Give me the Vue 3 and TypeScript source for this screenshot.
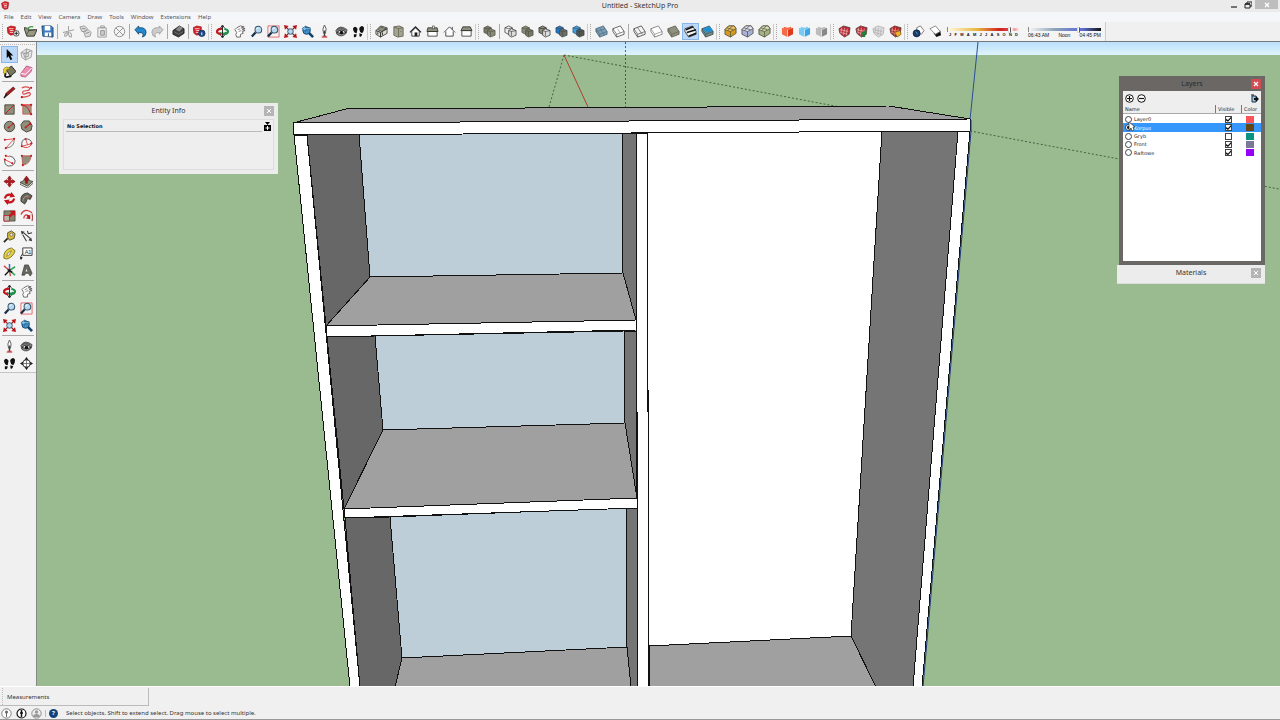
<script setup lang="ts">
import { ref } from 'vue'

type Shape = [d: string, fill: string, stroke?: string, width?: number]

const disc = (x: number, y: number, r: number) =>
  `M${x - r} ${y}a${r} ${r} 0 1 0 ${2 * r} 0a${r} ${r} 0 1 0 ${-2 * r} 0z`

const RED = '#c4161c'
const INK = '#222222'
const STONE = '#8f8f7c'

const logo = (x: number, y: number): Shape[] => [
  [`M${x} ${y + 2}l4 -2 5 1 0 2 -1 6 -4 1 -3 -2z`, '#d3232a', '#8d0f14', 0.6],
  [`M${x + 2} ${y + 3}l5 0M${x + 3} ${y + 5}l4 0M${x + 3} ${y + 7}l4 0`, 'none', '#ffffff', 0.8],
]
const lens = (x: number, y: number): Shape[] => [
  [`M${x - 3} ${y + 3}l-4 4.500`, 'none', '#14304a', 2.4],
  [disc(x, y, 3.6), '#b5d8ef', '#37536b', 1.1],
  [`M${x - 2} ${y - 1}l2 -1`, 'none', '#ffffff', 1],
]
const pair = (back: string, front: string, line = INK): Shape[] => [
  ['M1 3l4 -2 4 2 0 5 -4 2 -4 -2z', back, line, 0.7],
  ['M1 3l4 1 4 -1', 'none', line, 0.6],
  ['M5 6l3 -2 5 2 0 5 -5 2 -3 -2z', front, line, 0.7],
  ['M5 6l3 1 5 -1M8 7l0 5', 'none', line, 0.6],
]
const slab = (fill: string, line: string): Shape[] => [
  ['M1 4l8 -3 4 6 0 3 -8 3 -4 -6z', fill, line, 0.9],
  ['M1 4l4 6 8 -3M5 10l0 3', 'none', line, 0.7],
]
const section = (left: string, right: string): Shape[] => [
  ['M1 3l6 2 0 8 -6 -3z', left, 'none'],
  ['M13 3l-6 2 0 8 6 -3z', right, 'none'],
  ['M3 2l4 1 4 -1 0 2 -4 2 -4 -2z', left, 'none'],
  ['M7 5l0 8', 'none', '#ffffff', 0.6],
]
const box = (top: string, side: string): Shape[] => [
  ['M1 5l4 -4 6 0 2 3 0 5 -6 4 -6 -3z', side, '#444433', 0.8],
  ['M1 5l4 -4 6 0 2 3 -6 3z', top, '#444433', 0.7],
  ['M7 7l0 6M3 3l7 2M9 1l-5 5', 'none', '#555544', 0.8],
]
const brick = (fill: string, mark: string): Shape[] => [
  ['M1 4l5 -3 7 2 -1 7 -5 3 -5 -4z', fill, '#4a3a36', 0.8],
  ['M2 5l9 2M4 3l-1 6M7 3l-1 8M10 4l-1 7M3 8l7 2', 'none', mark, 0.7],
]
const steps: Shape[] = [
  ['M1 4q2 -4 5 0l-1 5q-3 0 -4 -5zM2 10l3 0q0 4 -3 3z', '#111111'],
  ['M8 3q3 -4 5 0q0 4 -2 6q-4 -2 -3 -6zM8 9l3 1q-1 4 -3 2z', '#111111'],
]
const hand: Shape[] = [
  ['M4 13q-2 -3 0 -5l-2 -3 2 -2 4 -2 4 1 -3 1 4 1 -3 1 3 1 -3 1 1 2 -3 1 0 3z', '#ffffff', '#555555', 0.9],
  ['M5 5l3 -1M6 7l3 -1', 'none', '#555555', 0.7],
]
const eye: Shape[] = [
  ['M1 6q4 -7 12 -1l-1 4q-5 5 -10 1z', '#8a8a8a', '#333333', 0.8],
  ['M2 8q5 -5 10 0q-5 3 -10 0z', '#eeeeee', '#111111', 0.9],
  [disc(7, 8, 1.8), '#111111'],
  ['M2 5q5 -3 9 0', 'none', '#444444', 0.8],
]
const extents: Shape[] = [
  ['M0 0l5 1 -4 4zM14 0l-1 5 -4 -4zM0 14l1 -5 4 4zM14 14l-5 -1 4 -4z', RED],
  ['M2 2l10 10M12 2l-10 10', 'none', '#8d1a1a', 1.4],
  [disc(7, 7, 3), '#b5d8ef', '#37536b', 1],
]
const orbit: Shape[] = [
  ['M9 4q4 1 4 3q-1 3 -6 3', 'none', '#1c8f4a', 2.4],
  ['M6 10q-5 -1 -5 -3q1 -3 6 -3', 'none', RED, 2.4],
  ['M4 8q3 2 7 0', 'none', '#1c8f4a', 1.4],
  ['M7 1l0 12M5 3l2 -3 2 3M5 11l2 3 2 -3', 'none', INK, 1],
]
const previous: Shape[] = [
  ['M8 8l5 5', 'none', '#123f66', 2.8],
  [disc(6, 6, 4), '#3d8fca', '#123f66', 1],
  ['M1 4l4 -3 0 2 5 0 0 2 -5 0 0 2z', '#7cc4ef', '#123f66', 0.6],
]
const rocket: Shape[] = [
  ['M7 0q-3 4 -1 9l2 0q2 -5 -1 -9z', '#ffffff', '#555555', 1],
  ['M5 12l4 0M4 13l6 0', 'none', RED, 1],
  ['M7 6l0 6', 'none', '#444444', 1.4],
]

const icons: Record<string, Shape[]> = {
  logo: logo(2, 2),
  new: [...logo(0, 1), [disc(10, 9, 3), '#ffffff', INK, 0.8], ['M10 7l0 4M8 9l4 0', 'none', INK, 1]],
  open: [
    ['M0 3l3 9 8 0 3 -7 -9 1 0 -2 -3 -1z', '#9a9a82', INK, 0.9],
    ['M3 10l3 -5 6 0', 'none', '#444438', 0.8],
    ['M3 4l3 1M4 4q2 -3 6 -2', 'none', '#3e9c3e', 1.3],
  ],
  save: [
    ['M1 1l10 0 2 2 0 10 -11 -1z', '#3a7dc0', '#1c426b', 0.9],
    ['M4 1l6 0 0 5 -6 0zM4 8l7 0 0 4 -7 0z', '#ffffff'],
    ['M8 9l0 3', 'none', '#1c426b', 1],
  ],
  cut: [['M1 8l12 -3M7 1l0 8M6 8q-4 1 -3 4q3 0 3 -4M8 8q3 1 2 5q-3 0 -3 -4', 'none', '#a2a2a2', 1.1]],
  copy: [
    ['M1 2l5 -1 3 3 -2 3 -4 0zM5 7l5 -2 3 3 -1 4 -5 1z', '#dddddd', '#999999', 1],
    ['M3 4l4 0M7 9l4 -1', 'none', '#888888', 1],
  ],
  paste: [
    ['M2 3l9 0 0 10 -9 0zM5 1l4 0 0 2 -4 0z', '#eeeeee', '#9c9c9c', 1],
    ['M5 6l4 0 0 5 -4 0z', '#cccccc', '#888888', 0.9],
  ],
  erase: [
    [disc(7, 7, 5.6), 'none', '#8e8e8e', 1],
    ['M3 3l8 8M11 3l-8 8', 'none', '#8e8e8e', 1],
  ],
  undo: [['M1 5l4 -4 0 2q8 -1 8 5q0 4 -4 5q3 -5 -4 -5l0 2z', '#2388cc', '#0e3c60', 0.8]],
  redo: [['M13 5l-4 -4 0 2q-8 -1 -8 5q0 4 4 5q-3 -5 4 -5l0 2z', '#cccccc', '#999999', 0.8]],
  print: [
    ['M1 6l7 -5 5 3 0 5 -6 4 -6 -3z', '#3e3e3e', '#111111', 0.8],
    ['M4 5l4 -4 4 2 -4 4z', '#8b8b8b'],
    ['M2 7l5 3 5 -3', 'none', '#888888', 0.7],
  ],
  info: [...logo(0, 1), [disc(9.5, 9, 3.5), '#1d4b8a', '#10264a', 0.7], ['M9.500 8l0 3', 'none', '#ffffff', 1]],
  orbit,
  pan: hand,
  zoom: lens(9, 5),
  zoomWindow: [['M1 1l12 0 0 12 -12 0z', 'none', '#e05656', 0.9], ...lens(8, 5)],
  extents,
  previous,
  rocket,
  eye,
  steps,
  iso: [
    ['M1 6l5 -5 7 2 0 6 -7 4 -5 -3z', '#dcdcd2', INK, 0.8],
    ['M1 6l5 2 7 -4M6 8l0 5M8 8l0 3M3 8l0 2', 'none', INK, 1],
    ['M6 2l6 2 -5 3 -4 -2z', STONE, INK, 0.6],
  ],
  top: [
    ['M2 2l6 -1 4 2 0 9 -6 1 -4 -2z', '#a5a58f', '#606050', 0.9],
    ['M2 2l5 2 5 -1M7 4l0 9M9 7l1 0', 'none', '#606050', 0.8],
  ],
  front: [
    ['M3 7l0 5 8 0 0 -5 -4 -4z', '#ffffff', INK, 0.9],
    ['M1 8l6 -6 6 6', 'none', INK, 1.3],
    ['M6 8l3 0 0 4 -3 0z', '#222222'],
  ],
  right: [
    ['M2 7l10 0 0 5 -10 0z', '#ffffff', INK, 0.8],
    ['M2 3l10 0 1 4 -12 0z', STONE, INK, 0.8],
    ['M7 1l2 0 0 3 -2 0z', '#ffffff', INK, 0.6],
  ],
  back: [['M3 7l0 5 8 0 0 -5M1 8l6 -6 6 6M10 2l0 3', '#ffffff', '#333333', 0.9]],
  left: [
    ['M2 6l10 0 0 6 -10 0z', '#ffffff', INK, 0.8],
    ['M3 2l8 0 2 4 -12 0z', STONE, INK, 0.8],
  ],
  outer: pair('#77776a', '#8a8a78', '#4a4a40'),
  intersect: pair('#eeeeee', '#dddddd'),
  union: pair('#8a8a78', '#77776a', '#444438'),
  subtract: pair('#8a8a78', '#dddddd'),
  trim: pair('#2277c5', '#6e6e60', '#344450'),
  split: pair('#3b9fe5', '#555550', '#344450'),
  xray: [...slab('#7c9fb8', '#4b6679'), ['M5 3l5 8M1 7l10 -3', 'none', '#4b6679', 0.6]],
  backEdges: [...slab('#ffffff', '#4a4a4a'), ['M6 4l3 5', 'none', '#777777', 0.6]],
  wire: [...slab('none', '#444444'), ['M5 3l5 7', 'none', '#444444', 0.7]],
  hidden: slab('#ffffff', '#777777'),
  shaded: slab('#90907f', '#5c5c4f'),
  textured: [
    ['M1 4l8 -3 4 6 0 3 -8 3 -4 -6z', '#f4f4f4', '#222222', 0.8],
    ['M2 5l8 -3M3 8l10 -3M5 12l8 -3', 'none', '#111111', 1.7],
  ],
  mono: [...slab('#7e8a84', '#3d4d50'), ['M2 4l7 -3 4 5 -7 3z', '#208fd0']],
  boxGold: box('#f0c15a', '#d89a1d'),
  boxBlue: box('#e0e4f8', '#a8b2d8'),
  boxGreen: box('#d5dcb0', '#a4b184'),
  sectionRed: section('#f36a48', '#e03a1c'),
  sectionBlue: section('#79cbf5', '#3fa2e2'),
  sectionGray: section('#bcbcbc', '#888888'),
  brickRed: brick('#ba2934', '#f0c5c5'),
  brickUp: [...brick('#ba2934', '#f0c5c5'), ['M10 6l3 4 -2 0 0 3 -3 0 0 -3 -2 0z', '#18823b']],
  brickGray: [...brick('#dddddd', '#aaaaaa').map((s): Shape => [s[0], s[1], '#aaaaaa', s[3]])],
  brickGold: [...brick('#b92225', '#e8b2a5'), ['M6 8l6 -2 1 4 -4 3z', '#f0b12b', '#6f4d10', 0.7]],
  shadowOn: [
    ['M5 3l4 -2 4 5 -3 4 -4 -1z', '#ffffff', '#555555', 0.8],
    [disc(5, 9, 3.8), '#183b68', '#0b203c', 0.8],
    ['M4 7l2 3', 'none', '#7ea4d4', 0.8],
  ],
  shadowOff: [
    ['M5 9l7 -3 1 5 -5 2z', '#111111'],
    ['M1 4l6 -3 5 6 -5 3z', '#ffffff', '#666666', 0.8],
  ],
  select: [['M4 1l0 10 2 -2 2 4 2 -1 -2 -4 3 0z', '#050505']],
  component: [
    ['M1 5l6 -4 6 2 -1 7 -6 3 -4 -3z', '#e5e5e5', '#999999', 0.9],
    ['M4 6l5 -1 0 4 -4 1zM7 1l-1 12M1 5l5 1 6 -3', 'none', '#9a9a9a', 1],
  ],
  paint: [
    ['M4 6l5 -5 5 6 -6 5z', '#777762', '#26261e', 1],
    ['M0 5q4 -5 8 -1l-4 1 -1 5q-3 0 -3 -5z', '#e7ce2d', '#65570d', 0.6],
    ['M3 9q-2 4 1 4l5 -1', 'none', '#151515', 2],
  ],
  eraser: [
    ['M1 9l6 -8 6 2 -1 4 -6 6 -5 -1z', '#ee8eb2', '#a94b70', 0.8],
    ['M1 9l5 1 7 -7', 'none', '#ffffff', 1],
  ],
  pencil: [
    ['M2 12l1 -4 8 -7 2 2 -8 7z', '#a41c20', '#500b0d', 0.7],
    ['M1 13l3 -4', 'none', '#111111', 1.3],
  ],
  freehand: [
    ['M2 2C6 0 12 1 10 4C8 6 2 4 3 8C4 11 10 5 11 8C12 10 8 12 2 12', 'none', '#d84b4f', 1.3],
    [`${disc(2, 12, 1.2)}${disc(12, 2, 1.2)}`, RED],
  ],
  rect: [
    ['M2 2l10 0 0 10 -10 0z', STONE, '#454538', 1],
    ['M2 12l10 -10', 'none', RED, 1],
  ],
  rotRect: [
    ['M3 3l9 0 0 9 -9 0z', '#9a9b86', '#c54b43', 0.8],
    ['M2 2l10 0M2 2q7 1 9 9', 'none', RED, 1],
    [`${disc(2, 2, 1.2)}${disc(12, 12, 1.2)}${disc(12, 2, 1.2)}`, RED],
  ],
  circle: [
    [disc(7, 7, 5.6), STONE, '#444438', 1],
    ['M6 8l5 -4', 'none', RED, 1],
    [`${disc(6, 8, 1.1)}${disc(11, 4, 1)}`, RED],
  ],
  polygon: [
    ['M4 1l6 0 3 5 -1 5 -5 2 -5 -3 -1 -5z', STONE, '#444438', 1],
    ['M6 8l5 -4', 'none', RED, 1.2],
    [`${disc(6, 8, 1.1)}${disc(11, 4, 1.2)}`, RED],
  ],
  arc: [
    ['M2 3l10 -1 -9 10', 'none', '#d94a4a', 1],
    ['M12 2q1 9 -9 10', 'none', '#777777', 1],
    [`${disc(2, 3, 1.1)}${disc(12, 2, 1.1)}${disc(3, 12, 1.1)}`, RED],
  ],
  twoArc: [
    ['M2 10q-1 -7 4 -8q6 0 7 5', 'none', '#555555', 1],
    ['M2 10q7 4 11 -3M2 10l11 -3M6 2l2 6', 'none', '#d94a4a', 1],
    [`${disc(2, 10, 1.1)}${disc(12, 7, 1.1)}${disc(6, 2, 1)}`, RED],
  ],
  threeArc: [
    ['M2 6q-1 6 4 7q7 0 7 -6q-1 -4 -6 -5', 'none', '#555555', 1],
    ['M2 6l8 4M3 2l4 1', 'none', '#d94a4a', 1],
    [`${disc(2, 6, 1.1)}${disc(3, 2, 1.1)}${disc(10, 10, 1.1)}`, RED],
  ],
  pie: [
    ['M2 2l10 0q-1 9 -9 10z', STONE, '#b84c42', 0.8],
    [`${disc(2, 2, 1.1)}${disc(12, 2, 1.1)}${disc(3, 12, 1.1)}`, RED],
  ],
  move: [['M7 1l2 3 -1 0 0 2 2 0 0 -1 3 2 -3 2 0 -1 -2 0 0 2 1 0 -2 3 -2 -3 1 0 0 -2 -2 0 0 1 -3 -2 3 -2 0 1 2 0 0 -2 -1 0z', RED, '#861015', 0.8]],
  push: [
    ['M0 8l6 -3 8 2 -6 5z', STONE, '#3c3c32', 0.9],
    ['M0 8l0 2 8 4 6 -5', 'none', '#3c3c32', 0.8],
    ['M7 1l3 4 -2 0 0 4 -2 0 0 -4 -2 0z', '#a5151b', '#4f0b0d', 0.5],
  ],
  rotate: [
    ['M2 7q1 -5 7 -4M12 7q-1 5 -7 4', 'none', RED, 2.2],
    ['M9 0l4 5 -6 1zM5 14l-4 -5 6 -1z', RED],
  ],
  follow: [
    ['M1 10q-1 -8 7 -9l5 3 -2 4q-4 -2 -4 2l-2 3z', '#66665a', '#22221e', 0.8],
    ['M8 4l3 2 -4 1z', '#bb5348'],
    ['M3 10q0 -5 6 -6', 'none', '#a5a594', 1],
  ],
  scale: [
    ['M1 2l12 0 0 11 -12 0z', '#85856f', '#464638', 0.8],
    ['M1 7l6 0 0 6 -6 0z', '#b7b7a8', RED, 0.8],
    ['M7 2l6 0 0 6 -2 -2 -3 3 -2 -2 3 -3z', RED],
  ],
  offset: [
    ['M1 6q4 -8 12 -2M4 10q1 -6 6 -2', 'none', '#d13b3c', 1.4],
    ['M13 5q1 4 0 8', 'none', '#8f1b1b', 1],
    ['M11 11l-5 -1 2 -1 -1 -3 3 1 1 -1z', RED],
  ],
  tape: [
    ['M5 3l4 -2 4 3 -1 5 -5 2 -2 -3z', '#d8bd3b', '#4a4014', 0.9],
    ['M5 9l-4 4', 'none', '#272310', 1.8],
    [disc(9, 5, 1.6), '#eeeeee', '#555555', 0.7],
  ],
  dimension: [
    ['M4 3l7 6M3 5l4 7M9 4l4 -1M8 1l1 3', 'none', '#333333', 1.1],
    ['M1 1l4 1 -3 3zM13 12l-4 -1 3 -3z', '#333333'],
  ],
  protractor: [
    ['M1 12q-1 -9 8 -11l4 3q-2 7 -9 9z', '#e3cf44', '#716416', 0.9],
    ['M4 10q0 -4 5 -6q-1 5 -5 6z', '#ffffff', '#716416', 0.7],
  ],
  axes: [
    ['M7 7l0 -7', 'none', '#3768c9', 1.6],
    ['M7 7l6 -4M7 7l6 5', 'none', '#38a85f', 1.8],
    ['M7 7l-6 -5M7 7l1 6', 'none', '#d04d4d', 1.5],
    ['M8 6l-6 6M5 6l5 3', 'none', '#151515', 1.5],
  ],
  text3d: [
    ['M2 12l3 -11 4 0 4 9 -2 3 -2 -3 -3 0 -1 2z', '#66665e', '#333330', 0.7],
    ['M7 5l1 3 -2 0z', '#f4f4f4'],
  ],
  lookSection: [
    ['M7 0l2 3 2 2 3 2 -3 2 -2 2 -2 3 -2 -3 -2 -2 -3 -2 3 -2 2 -2z', '#111111'],
    [disc(7, 7, 4), '#ffffff', '#222222', 0.9],
    ['M3 7l8 0M7 3l0 8', 'none', '#555555', 0.8],
  ],
}

const menus = ['File', 'Edit', 'View', 'Camera', 'Draw', 'Tools', 'Window', 'Extensions', 'Help']

// A toolbar is split by grips; the groups inside it are split by thin rules.
const toolbars = [
  [['new', 'open', 'save'], ['cut', 'copy', 'paste', 'erase'], ['undo', 'redo'], ['print'], ['info']],
  [['orbit', 'pan', 'zoom', 'zoomWindow', 'extents', 'previous', 'rocket', 'eye', 'steps']],
  [['iso', 'top', 'front', 'right', 'back', 'left']],
  [['outer'], ['intersect', 'union', 'subtract', 'trim', 'split']],
  [['xray', 'backEdges'], ['wire', 'hidden', 'shaded', 'textured', 'mono']],
  [['boxGold', 'boxBlue', 'boxGreen']],
  [['sectionRed', 'sectionBlue', 'sectionGray']],
  [['brickRed', 'brickUp', 'brickGray', 'brickGold']],
  [['shadowOn', 'shadowOff']],
]
const palette = [
  ['select', 'component', 'paint', 'eraser'],
  ['pencil', 'freehand', 'rect', 'rotRect', 'circle', 'polygon', 'arc', 'twoArc', 'threeArc', 'pie'],
  ['move', 'push', 'rotate', 'follow', 'scale', 'offset'],
  ['tape', 'dimension', 'protractor', 'label', 'axes', 'text3d'],
  ['orbit', 'pan', 'zoom', 'zoomWindow', 'extents', 'previous'],
  ['rocket', 'eye', 'steps', 'lookSection'],
]
const months = 'JFMAMJJASOND'.split('')

const tool = ref('select')
const faceStyle = ref('textured')
const date = ref(87)
const time = ref(70)
const activeLayer = ref('Korpus')
const layers = ref([
  { name: 'Layer0', visible: true, swatch: 'coral' },
  { name: 'Korpus', visible: true, swatch: 'brown' },
  { name: 'Gryb', visible: false, swatch: 'teal' },
  { name: 'Front', visible: true, swatch: 'slate' },
  { name: 'Raftowe', visible: true, swatch: 'violet' },
])

const DARK = '#676767'
const SIDE = '#757575'
const TOP = '#a0a0a0'
const BACK = '#bdced9'
const faces: [string, string][] = [
  ['293,123 346,109 889,106 970,119', TOP],
  ['307,135 359,134 370,277 326,326', DARK],
  ['359,134 622,133 623,273 370,277', BACK],
  ['622,133 636,133 636,320 623,273', SIDE],
  ['370,277 623,273 636,320 326,326', TOP],
  ['327,337 375,336 383,430 344,509', DARK],
  ['375,336 624,331 625,423 383,430', BACK],
  ['624,331 636,331 637,498 625,423', SIDE],
  ['383,430 625,423 637,498 344,509', TOP],
  ['345,518 390,517 402,658 395,687 360,687', DARK],
  ['390,517 626,508 627,647 402,658', BACK],
  ['626,508 637,508 638,687 631,687 627,647', SIDE],
  ['402,658 627,647 631,687 395,687', TOP],
  ['647,133 882,131 851,636 649,646', '#ffffff'],
  ['649,646 851,636 876,687 649,687', TOP],
  ['882,131 958,131 913,687 876,687 851,636', SIDE],
  ['294,135 307,135 360,687 350,687', '#ffffff'],
  ['636,133 647,133 649,687 638,687', '#ffffff'],
  ['958,131 970,131 922,687 913,687', '#ffffff'],
  ['326,326 636,320 636,330 327,337', '#ffffff'],
  ['344,509 637,498 637,508 345,518', '#ffffff'],
  ['293,123 970,119 970,131 294,135', '#ffffff'],
]
</script>

<template>
  <div class="app">
    <header class="titlebar">
      <svg class="brand" viewBox="0 0 14 14" aria-hidden="true">
        <path v-for="(s, i) in icons.logo" :key="i" :d="s[0]" :fill="s[1]" :stroke="s[2]" :stroke-width="s[3]" />
      </svg>
      <h1>Untitled - SketchUp Pro</h1>
      <div class="window-buttons">
        <button aria-label="Minimize"><svg viewBox="0 0 8 8"><path d="M1 6h6" stroke="#222" stroke-width="1.200" /></svg></button>
        <button aria-label="Restore"><svg viewBox="0 0 8 8"><path d="M3 3V1h5v4H6M1 3h5v4H1z" fill="none" stroke="#222" /><path d="M1 3h5" stroke="#222" stroke-width="1.500" /></svg></button>
        <button class="close" aria-label="Close"><svg viewBox="0 0 8 8"><path d="M2 2l4 4M6 2l-4 4" stroke="#fff" stroke-width="1.300" /></svg></button>
      </div>
    </header>

    <nav class="menubar">
      <button v-for="m in menus" :key="m">{{ m }}</button>
    </nav>

    <div class="toolbar-row">
      <div v-for="(bar, b) in toolbars" :key="b" class="toolbar">
        <div v-for="(group, g) in bar" :key="g" class="group">
          <button
            v-for="name in group"
            :key="name"
            class="tool"
            :class="{ active: name === faceStyle }"
            :aria-label="name"
          >
            <svg viewBox="0 0 14 14">
              <path v-for="(s, i) in icons[name]" :key="i" :d="s[0]" :fill="s[1]" :stroke="s[2]" :stroke-width="s[3]" />
            </svg>
          </button>
        </div>
      </div>
      <div class="shadow-sliders">
        <label class="slider date">
          <input v-model="date" type="range" min="0" max="100" aria-label="Date" />
          <span class="ticks"><i v-for="(m, i) in months" :key="i">{{ m }}</i></span>
        </label>
        <label class="slider time">
          <input v-model="time" type="range" min="0" max="100" aria-label="Time" />
          <span class="ticks"><i>06:43 AM</i><i>Noon</i><i>04:45 PM</i></span>
        </label>
      </div>
    </div>

    <main class="workspace">
      <aside class="palette">
        <div class="palette-tools">
          <div v-for="(group, g) in palette" :key="g" class="palette-group">
            <button
              v-for="name in group"
              :key="name"
              class="tool"
              :class="{ active: name === tool }"
              :aria-label="name"
              @click="tool = name"
            >
              <svg v-if="name === 'label'" viewBox="0 0 14 14">
                <path d="M3 1h10v8H3zM3 7L1 10v3" fill="#fff" stroke="#333" />
                <path d="M0 11h3l-2 3z" fill="#111" />
                <text x="5" y="7" font-size="6" font-family="Liberation Sans, sans-serif" fill="#222">A1</text>
              </svg>
              <svg v-else viewBox="0 0 14 14">
                <path v-for="(s, i) in icons[name]" :key="i" :d="s[0]" :fill="s[1]" :stroke="s[2]" :stroke-width="s[3]" />
              </svg>
            </button>
          </div>
        </div>
      </aside>

      <section class="canvas">
        <svg class="scene" viewBox="37 42 1243 644" preserveAspectRatio="xMidYMin slice" aria-label="Model">
          <defs>
            <linearGradient id="sky" x1="0" y1="0" x2="0" y2="1">
              <stop offset="0" stop-color="#b9e0fb" />
              <stop offset="1" stop-color="#e0f3fc" />
            </linearGradient>
          </defs>
          <rect x="37" y="42" width="1243" height="645" fill="#9abb90" />
          <rect x="37" y="42" width="1243" height="13" fill="url(#sky)" />
          <path
            d="M564 55L549 107M564 55L840 107M625.500 42V107M970 131L1279 189"
            fill="none"
            stroke="#2c4a2c"
            stroke-dasharray="2 2"
            stroke-width="0.800"
          />
          <path d="M564 55L588 107" stroke="#a8412f" fill="none" />
          <path d="M978 42L970 120" stroke="#2a4d9a" fill="none" />
          <polygon
            v-for="(f, i) in faces"
            :key="i"
            :points="f[0]"
            :fill="f[1]"
            stroke="#111111"
            stroke-width="1"
            stroke-linejoin="round"
            shape-rendering="crispEdges"
          />
          <path d="M971 120V131L923 687" stroke="#203a78" fill="none" />
        </svg>

        <section class="panel entity">
          <h2>Entity Info</h2>
          <button class="x" aria-label="Close Entity Info"><svg viewBox="0 0 8 8"><path d="M2 2l4 4M6 2l-4 4" stroke="#fff" /></svg></button>
          <div class="entity-body">
            <p>No Selection</p>
            <button class="expand" aria-label="Show details">
              <svg viewBox="0 0 7 9"><path d="M1 0h5L3.500 3z" /><path d="M0 3h7v6H0z" /><path d="M3.500 4v4M1.500 6h4" stroke="#fff" /></svg>
            </button>
          </div>
        </section>

        <div class="tray">
          <section class="panel layers">
            <h2>Layers</h2>
            <button class="x" aria-label="Close Layers"><svg viewBox="0 0 8 8"><path d="M2 2l4 4M6 2l-4 4" stroke="#fff" stroke-width="1.300" /></svg></button>
            <div class="layers-body">
              <div class="layer-actions">
                <button aria-label="Add layer"><svg viewBox="0 0 9 9"><circle cx="4.500" cy="4.500" r="3.800" fill="#fff" stroke="#111" /><path d="M2 4.500h5M4.500 2v5" stroke="#111" stroke-width="1.200" /></svg></button>
                <button aria-label="Delete layer"><svg viewBox="0 0 9 9"><circle cx="4.500" cy="4.500" r="3.800" fill="#fff" stroke="#111" /><path d="M2 4.500h5" stroke="#111" stroke-width="1.200" /></svg></button>
                <button class="details" aria-label="Details"><svg viewBox="0 0 9 9"><path d="M2 2h4v6H2z" fill="#9cc6e6" stroke="#223344" /><path d="M1 1h3" stroke="#111" /><path d="M4 4h2V2l3 3-3 3V6H4z" fill="#111" /></svg></button>
              </div>
              <table>
                <thead>
                  <tr><th class="name">Name</th><th class="vis">Visible</th><th class="col">Color</th></tr>
                </thead>
                <tbody>
                  <tr v-for="l in layers" :key="l.name" :class="{ current: l.name === activeLayer }">
                    <td class="name">
                      <label><input v-model="activeLayer" type="radio" name="layer" :value="l.name" />{{ l.name }}</label>
                    </td>
                    <td class="vis"><input v-model="l.visible" type="checkbox" :aria-label="'Show ' + l.name" /></td>
                    <td class="col"><span class="swatch" :class="l.swatch"></span></td>
                  </tr>
                </tbody>
              </table>
            </div>
            <svg class="pointer" viewBox="0 0 8 11" aria-hidden="true"><path d="M1 1v8l2-2 1 3 2-1-1-3h2z" fill="#fff" stroke="#333" stroke-width="0.700" /></svg>
          </section>
          <section class="panel materials">
            <h2>Materials</h2>
            <button class="x" aria-label="Close Materials"><svg viewBox="0 0 8 8"><path d="M2 2l4 4M6 2l-4 4" stroke="#fff" /></svg></button>
          </section>
        </div>
      </section>
    </main>

    <div class="measure-row">
      <div class="measurements">Measurements</div>
    </div>
    <footer class="status">
      <button aria-label="Geo-location"><svg viewBox="0 0 11 11"><circle cx="5.500" cy="5.500" r="4.700" fill="#fff" stroke="#666" stroke-width="0.800" /><circle cx="5.500" cy="4" r="1.500" fill="#666" /><path d="M5.500 5v4" stroke="#666" /></svg></button>
      <button aria-label="Credits"><svg viewBox="0 0 11 11"><circle cx="5.500" cy="5.500" r="4.500" fill="#fff" stroke="#111" stroke-width="1.200" /><circle cx="5.500" cy="3" r="1" /><path d="M5.500 4v5M4 5h3" stroke="#111" stroke-width="1.500" /></svg></button>
      <button aria-label="Sign in"><svg viewBox="0 0 11 11"><circle cx="5.500" cy="5.500" r="4.700" fill="#eee" stroke="#777" stroke-width="0.800" /><circle cx="5.500" cy="4" r="1.700" fill="#999" /><path d="M2 9q0-3 3.500-3t3.500 3z" fill="#999" /></svg></button>
      <span class="divider"></span>
      <button class="help" aria-label="Help">?</button>
      <p>Select objects. Shift to extend select. Drag mouse to select multiple.</p>
    </footer>
  </div>
</template>

<style>
body {
  margin: 0;
}
</style>

<style scoped>
.app {
  display: flex;
  flex-direction: column;
  height: 100vh;
  box-sizing: border-box;
  overflow: hidden;
  border-bottom: 1px solid #999;
  background: #f0f0f0;
  color: #333;
  font-family: 'Noto Sans', 'Open Sans', sans-serif;
  font-size: 6px;
}
.app *,
.app *::before {
  box-sizing: border-box;
}
button {
  display: flex;
  align-items: center;
  justify-content: center;
  margin: 0;
  padding: 0;
  border: 0;
  background: none;
  color: inherit;
  font: inherit;
}
svg {
  display: block;
}
h1,
h2,
p {
  margin: 0;
  font-weight: 400;
}
.titlebar {
  display: grid;
  grid-template-columns: 1fr auto 1fr;
  flex: none;
  height: 12px;
  background: #ebebeb;
}
.brand {
  width: 11px;
  height: 11px;
}
h1 {
  font-size: 7px;
  line-height: 12px;
}
.window-buttons {
  display: flex;
  justify-content: flex-end;
  padding-right: 2px;
}
.window-buttons button {
  width: 14px;
  height: 9px;
}
.window-buttons svg {
  width: 8px;
  height: 8px;
}
.window-buttons .close {
  width: 23px;
  background: #bdbdbd;
}
.menubar {
  display: flex;
  flex: none;
  gap: 7px;
  height: 10px;
  padding: 0 4px;
  background: #f5f6fa;
  color: #555;
}
.menubar button {
  height: 10px;
  line-height: 10px;
}
.toolbar-row {
  display: flex;
  flex: none;
  height: 20px;
  border-bottom: 1px solid #777;
  background: #f0f0f0;
}
.toolbar {
  display: flex;
  align-items: center;
  background: #f4f4f4;
}
.toolbar::before {
  content: '';
  width: 6px;
  height: 16px;
  border-left: 1px solid #ccc;
  background: linear-gradient(#aaa 50%, #0000 0) 2px 0 / 1px 2px repeat-y;
}
.toolbar:first-child::before {
  width: 5px;
  border-left: 0;
}
.group {
  display: flex;
}
.group + .group {
  padding-left: 4px;
  background: linear-gradient(#aaa, #aaa) 1px 50% / 1px 15px no-repeat;
}
.tool {
  width: 17px;
  height: 17px;
}
.tool svg {
  flex: none;
  width: 13px;
  height: 13px;
}
.tool.active {
  border: 1px solid #8ab6e8;
  background: #bcd8f8;
}
.shadow-sliders {
  display: flex;
  gap: 8px;
  padding: 5px 4px 0 3px;
  border-right: 1px solid #ccc;
  background: #f4f4f4;
}
.slider {
  display: flex;
  flex-direction: column;
  width: 73px;
}
.slider input {
  width: 100%;
  height: 5px;
  margin: 0;
  appearance: none;
  border-left: 1px solid #888;
  background: linear-gradient(90deg, #fdf9e0, #e8b83c 40%, #d02020 72%, #d84444 84%, #fff 88%, #e99 92%, #fff) 0 1px / 100% 3px no-repeat;
}
.slider.time input {
  background: linear-gradient(90deg, #f4f6f8, #8fa5b8 35%, #6c7fd0 60%, #5a6fd0 75%, #111) 0 1px / 100% 3px no-repeat;
}
.slider input::-webkit-slider-thumb {
  appearance: none;
  width: 3px;
  height: 6px;
  border: 1px solid #ddd;
  border-right-color: #555;
  background: #fff;
}
.ticks {
  display: flex;
  justify-content: space-between;
  padding: 0 2px;
  color: #111;
  font: 700 4px/6px 'Liberation Sans', sans-serif;
}
.time .ticks {
  padding: 0;
  font-size: 5px;
  font-weight: 400;
}
.ticks i {
  font-style: normal;
}
.workspace {
  display: flex;
  flex: 1;
  min-height: 0;
}
.palette {
  flex: none;
  width: 37px;
  border-right: 1px solid #888;
}
.palette-tools {
  padding: 4px 1px 0;
  background: linear-gradient(90deg, #bbb 50%, #0000 0) 0 2px / 2px 1px repeat-x #f4f4f4;
  border-bottom: 1px solid #c4c4c4;
}
.palette-group {
  display: grid;
  grid-template-columns: 17px 17px;
}
.palette-group + .palette-group {
  padding-top: 4px;
  background: linear-gradient(#aaa, #aaa) 1px 1px / 32px 1px no-repeat;
}
.canvas {
  position: relative;
  flex: 1;
  min-width: 0;
  overflow: hidden;
}
.scene {
  width: 100%;
  height: 100%;
}
.panel {
  position: relative;
  background: #ececec;
}
.panel h2 {
  font-size: 7px;
  line-height: 16px;
  text-align: center;
}
.x {
  position: absolute;
  top: 3px;
  right: 4px;
  width: 10px;
  height: 10px;
  background: #b5b5b5;
}
.x svg {
  width: 8px;
  height: 8px;
}
.entity {
  position: absolute;
  top: 61px;
  left: 22px;
  width: 219px;
  height: 71px;
  padding: 0 4px 4px;
}
.entity-body {
  display: flex;
  gap: 2px;
  height: 51px;
  padding: 0 2px;
  border: 1px solid #ddd;
  background: #eee;
}
.entity-body p {
  flex: 1;
  height: 12px;
  padding-left: 1px;
  border-bottom: 1px solid #bbb;
  color: #111;
  font: 700 5px/13px 'DejaVu Sans', sans-serif;
}
.expand {
  width: 7px;
  height: 12px;
}
.expand svg {
  width: 7px;
  height: 9px;
}
.tray {
  position: absolute;
  top: 34px;
  right: 15px;
  width: 148px;
}
.layers {
  height: 189px;
  margin-left: 2px;
  padding: 0 4px 4px;
  background: #6a6764;
}
.layers h2 {
  color: #2c2c2c;
  line-height: 15px;
}
.layers .x {
  background: #d14b52;
}
.layers-body {
  height: 170px;
  background: #fff;
}
.layer-actions {
  display: flex;
  gap: 3px;
  align-items: center;
  height: 14px;
  padding: 0 2px;
  background: #eee;
}
.layer-actions svg {
  width: 9px;
  height: 9px;
}
.details {
  margin-left: auto;
}
table {
  display: block;
  color: #222;
  font: 5px/8px 'DejaVu Sans', sans-serif;
}
thead {
  display: block;
  height: 9px;
  border-bottom: 1px solid #aaa;
  background: #eee;
}
tr {
  display: flex;
  flex: 1;
  align-items: center;
}
tbody {
  display: flex;
  flex-direction: column;
  height: 43px;
  padding-top: 1px;
}
th,
td {
  padding: 0;
  text-align: left;
  font-weight: 400;
}
.name {
  flex: 1;
  padding-left: 2px;
}
.vis {
  width: 26px;
}
.col {
  width: 20px;
}
th.vis,
th.col {
  padding-left: 2px;
  border-left: 1px solid #777;
}
td.vis {
  padding-left: 10px;
}
td.col {
  padding-left: 5px;
}
td label {
  display: flex;
  gap: 2px;
  align-items: center;
}
input[type='radio'],
input[type='checkbox'] {
  display: block;
  flex: none;
  width: 7px;
  height: 7px;
  margin: 0;
  appearance: none;
  border: 1px solid #444;
  background: #fff;
}
input[type='radio'] {
  border-radius: 50%;
}
input[type='radio']:checked {
  background: radial-gradient(#111 1px, #fff 2px);
}
input[type='checkbox']:checked::before {
  content: '';
  display: block;
  width: 5px;
  height: 5px;
  background: #111;
  clip-path: polygon(0 40%, 40% 65%, 100% 0, 100% 35%, 40% 100%, 0 75%);
}
.current {
  background: #3597fb;
  color: #fff;
}
.swatch {
  display: block;
  width: 8px;
  height: 7px;
}
.coral { background: #fb5455; }
.brown { background: #654512; }
.teal { background: #0a9384; }
.slate { background: #7a7798; }
.violet { background: #9500fb; }
.pointer {
  position: absolute;
  top: 45px;
  left: 9px;
  width: 8px;
  height: 11px;
}
.materials {
  height: 19px;
  border-bottom: 1px solid #ddd;
}
.measure-row {
  flex: none;
  height: 21px;
  padding-top: 1px;
  border-top: 1px solid #fff;
}
.measurements {
  width: 149px;
  height: 18px;
  padding-left: 7px;
  border-right: 1px solid #bbb;
  border-bottom: 1px solid #bbb;
  background: linear-gradient(#bbb 50%, #0000 0) 2px 0 / 1px 2px repeat-y;
  font-size: 6px;
  line-height: 18px;
}
.status {
  display: flex;
  flex: none;
  align-items: center;
  gap: 4px;
  height: 12px;
  padding-left: 1px;
  font-size: 6px;
  line-height: 12px;
}
.status svg {
  width: 11px;
  height: 11px;
}
.divider {
  width: 1px;
  height: 7px;
  margin: 0 -1px;
  background: #bbb;
}
.help {
  width: 9px;
  height: 9px;
  border-radius: 50%;
  background: #14437c;
  color: #fff;
  font-weight: 700;
  line-height: 9px;
}
.status p {
  padding-left: 4px;
}
</style>
